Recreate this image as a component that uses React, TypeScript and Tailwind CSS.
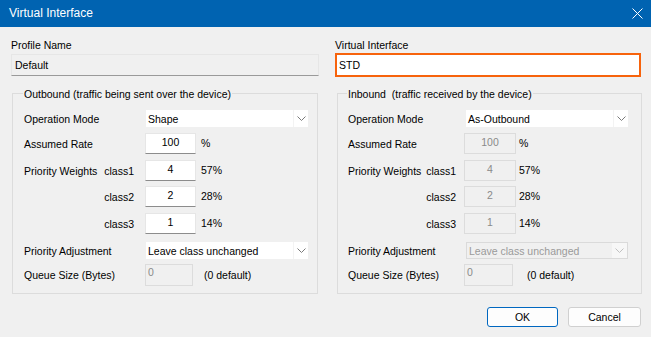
import React from "react";

type RowProps = {
    label?: string;
    sub?: string;
    labelW: string;
    subPad: string;
    children: React.ReactNode;
    h: string;
    mt: string;
};

function Row({ label, sub, labelW, subPad, children, h, mt }: RowProps) {
    return (
        <div className={`flex items-center ${h} ${mt}`}>
            <div className={`flex shrink-0 items-center justify-between pt-[1px] ${labelW} ${subPad}`}>
                <span>{label}</span>
                {sub && <span>{sub}</span>}
            </div>
            {children}
        </div>
    );
}

function Chevron({ color }: { color: string }) {
    return (
        <svg width="9" height="6" viewBox="0 0 9 6">
            <polyline points="0.5,0.5 4.5,4.5 8.5,0.5" fill="none" stroke={color} strokeWidth="1" />
        </svg>
    );
}

function Combo({ value, disabled, ml }: { value: string; disabled?: boolean; ml: string }) {
    return (
        <div
            className={`flex h-[17px] w-[162px] items-center ${ml} ${
                disabled ? "border border-[#DADADA] bg-[#F0F0F0] text-[#9A9A9A]" : "bg-white"
            }`}
        >
            <span className="flex-1 pl-[2px] pt-[1px]">{value}</span>
            <span
                className={`flex h-full w-[15px] items-center justify-center ${
                    disabled ? "bg-[#F7F7F7]" : "border-l border-[#F3F3F3]"
                }`}
            >
                <Chevron color={disabled ? "#C0C0C0" : "#7A7A7A"} />
            </span>
        </div>
    );
}

function Edit({ value, disabled, w }: { value: string; disabled?: boolean; w: string }) {
    return (
        <div
            className={`flex h-[21px] ${w} items-center justify-center pb-[2px] ${
                disabled
                    ? "border border-[#DCDCDC] bg-[#F0F0F0] text-[#8A8A8A]"
                    : "border border-[#E6E6E6] border-b-[#8C8C8C] bg-white"
            }`}
        >
            {value}
        </div>
    );
}

function QueueField({ w }: { w: string }) {
    return (
        <div className={`h-[22px] ${w} border border-[#DCDCDC] bg-[#F0F0F0] pl-[2px] leading-[14px] text-[#8A8A8A]`}>
            0
        </div>
    );
}

type GroupProps = {
    title: string;
    inbound?: boolean;
};

function Group({ title, inbound }: GroupProps) {
    const labelW = inbound ? "w-[116px]" : "w-[121px]";
    const subPad = inbound ? "pr-[8px]" : "pr-[11px]";
    const fieldW = inbound ? "w-[52px]" : "w-[51px]";
    const suffix = inbound ? "ml-[3px]" : "ml-[5px]";
    return (
        <div
            className={`relative border border-[#DCDCDC] pt-[16px] pb-[7px] ${
                inbound ? "mt-[16px] ml-[2px] w-[305px] pl-[10px]" : "mt-[17px] ml-[1px] w-[306px] pl-[11px]"
            }`}
        >
            <span
                className={`absolute top-[-6px] whitespace-pre bg-[#F0F0F0] px-[1px] ${
                    inbound ? "left-[9px]" : "left-[10px]"
                }`}
            >
                {title}
            </span>
            <Row label="Operation Mode" labelW={labelW} subPad="" h="h-[17px]" mt="">
                <Combo value={inbound ? "As-Outbound" : "Shape"} ml={inbound ? "ml-[2px]" : "ml-[1px]"} />
            </Row>
            <Row label="Assumed Rate" labelW={labelW} subPad="" h="h-[21px]" mt="mt-[6px]">
                <Edit value="100" disabled={inbound} w={fieldW} />
                <span className={suffix}>%</span>
            </Row>
            <Row label="Priority Weights" sub="class1" labelW={labelW} subPad={subPad} h="h-[21px]" mt="mt-[6px]">
                <Edit value="4" disabled={inbound} w={fieldW} />
                <span className={suffix}>57%</span>
            </Row>
            <Row sub="class2" labelW={labelW} subPad={subPad} h="h-[21px]" mt="mt-[5px]">
                <Edit value="2" disabled={inbound} w={fieldW} />
                <span className={suffix}>28%</span>
            </Row>
            <Row sub="class3" labelW={labelW} subPad={subPad} h="h-[21px]" mt="mt-[6px]">
                <Edit value="1" disabled={inbound} w={fieldW} />
                <span className={suffix}>14%</span>
            </Row>
            <Row label="Priority Adjustment" labelW={labelW} subPad="" h="h-[17px]" mt="mt-[8px]">
                <Combo
                    value="Leave class unchanged"
                    disabled={inbound}
                    ml={inbound ? "ml-[2px]" : "ml-[1px]"}
                />
            </Row>
            <Row label="Queue Size (Bytes)" labelW={labelW} subPad="" h="h-[22px]" mt="mt-[5px]">
                <QueueField w={inbound ? "w-[49px]" : "w-[48px]"} />
                <span className={`pt-[1px] ${inbound ? "ml-[14px]" : "ml-[11px]"}`}>(0 default)</span>
            </Row>
        </div>
    );
}

export default function App() {
    return (
        <div
            className="flex h-[337px] w-[651px] flex-col overflow-hidden bg-[#F0F0F0] text-[10.5px] leading-[13px] text-black"
            style={{ fontFamily: '"Liberation Sans", Arial, sans-serif' }}
        >
            <div className="flex h-[27px] shrink-0 items-center justify-between bg-[#0063B1] pl-[9px] pr-[8px] text-[12px] text-white">
                <span>Virtual Interface</span>
                <svg width="11" height="11" viewBox="0 0 11 11">
                    <path d="M0.5 0.5 L10.5 10.5 M10.5 0.5 L0.5 10.5" stroke="white" strokeWidth="1" />
                </svg>
            </div>

            <div className="flex gap-[16px] pl-[11px] pr-[9px] pt-[12px]">
                <div className="w-[308px]">
                    <div className="h-[13px]">Profile Name</div>
                    <div className="mt-[2px] flex h-[22px] w-[308px] items-center border border-[#E6E6E6] border-b-[#9A9A9A] bg-[#F0F0F0] pl-[3px] pt-[1px]">
                        Default
                    </div>
                    <Group title="Outbound (traffic being sent over the device)" />
                </div>
                <div className="w-[307px]">
                    <div className="h-[13px]">Virtual Interface</div>
                    <div className="mt-[1px] flex h-[24px] w-[306px] items-center border-2 border-[#F7630C] bg-white pl-[2px] pt-[1px]">
                        STD
                    </div>
                    <Group title="Inbound  (traffic received by the device)" inbound />
                </div>
            </div>

            <div className="mt-[13px] flex justify-end gap-[10px] pr-[10px]">
                <button className="h-[20px] w-[71px] rounded-[3px] border border-[#0067C0] bg-[#FDFDFD]">
                    OK
                </button>
                <button className="h-[20px] w-[73px] rounded-[3px] border border-[#D0D0D0] bg-[#FDFDFD]">
                    Cancel
                </button>
            </div>
        </div>
    );
}
